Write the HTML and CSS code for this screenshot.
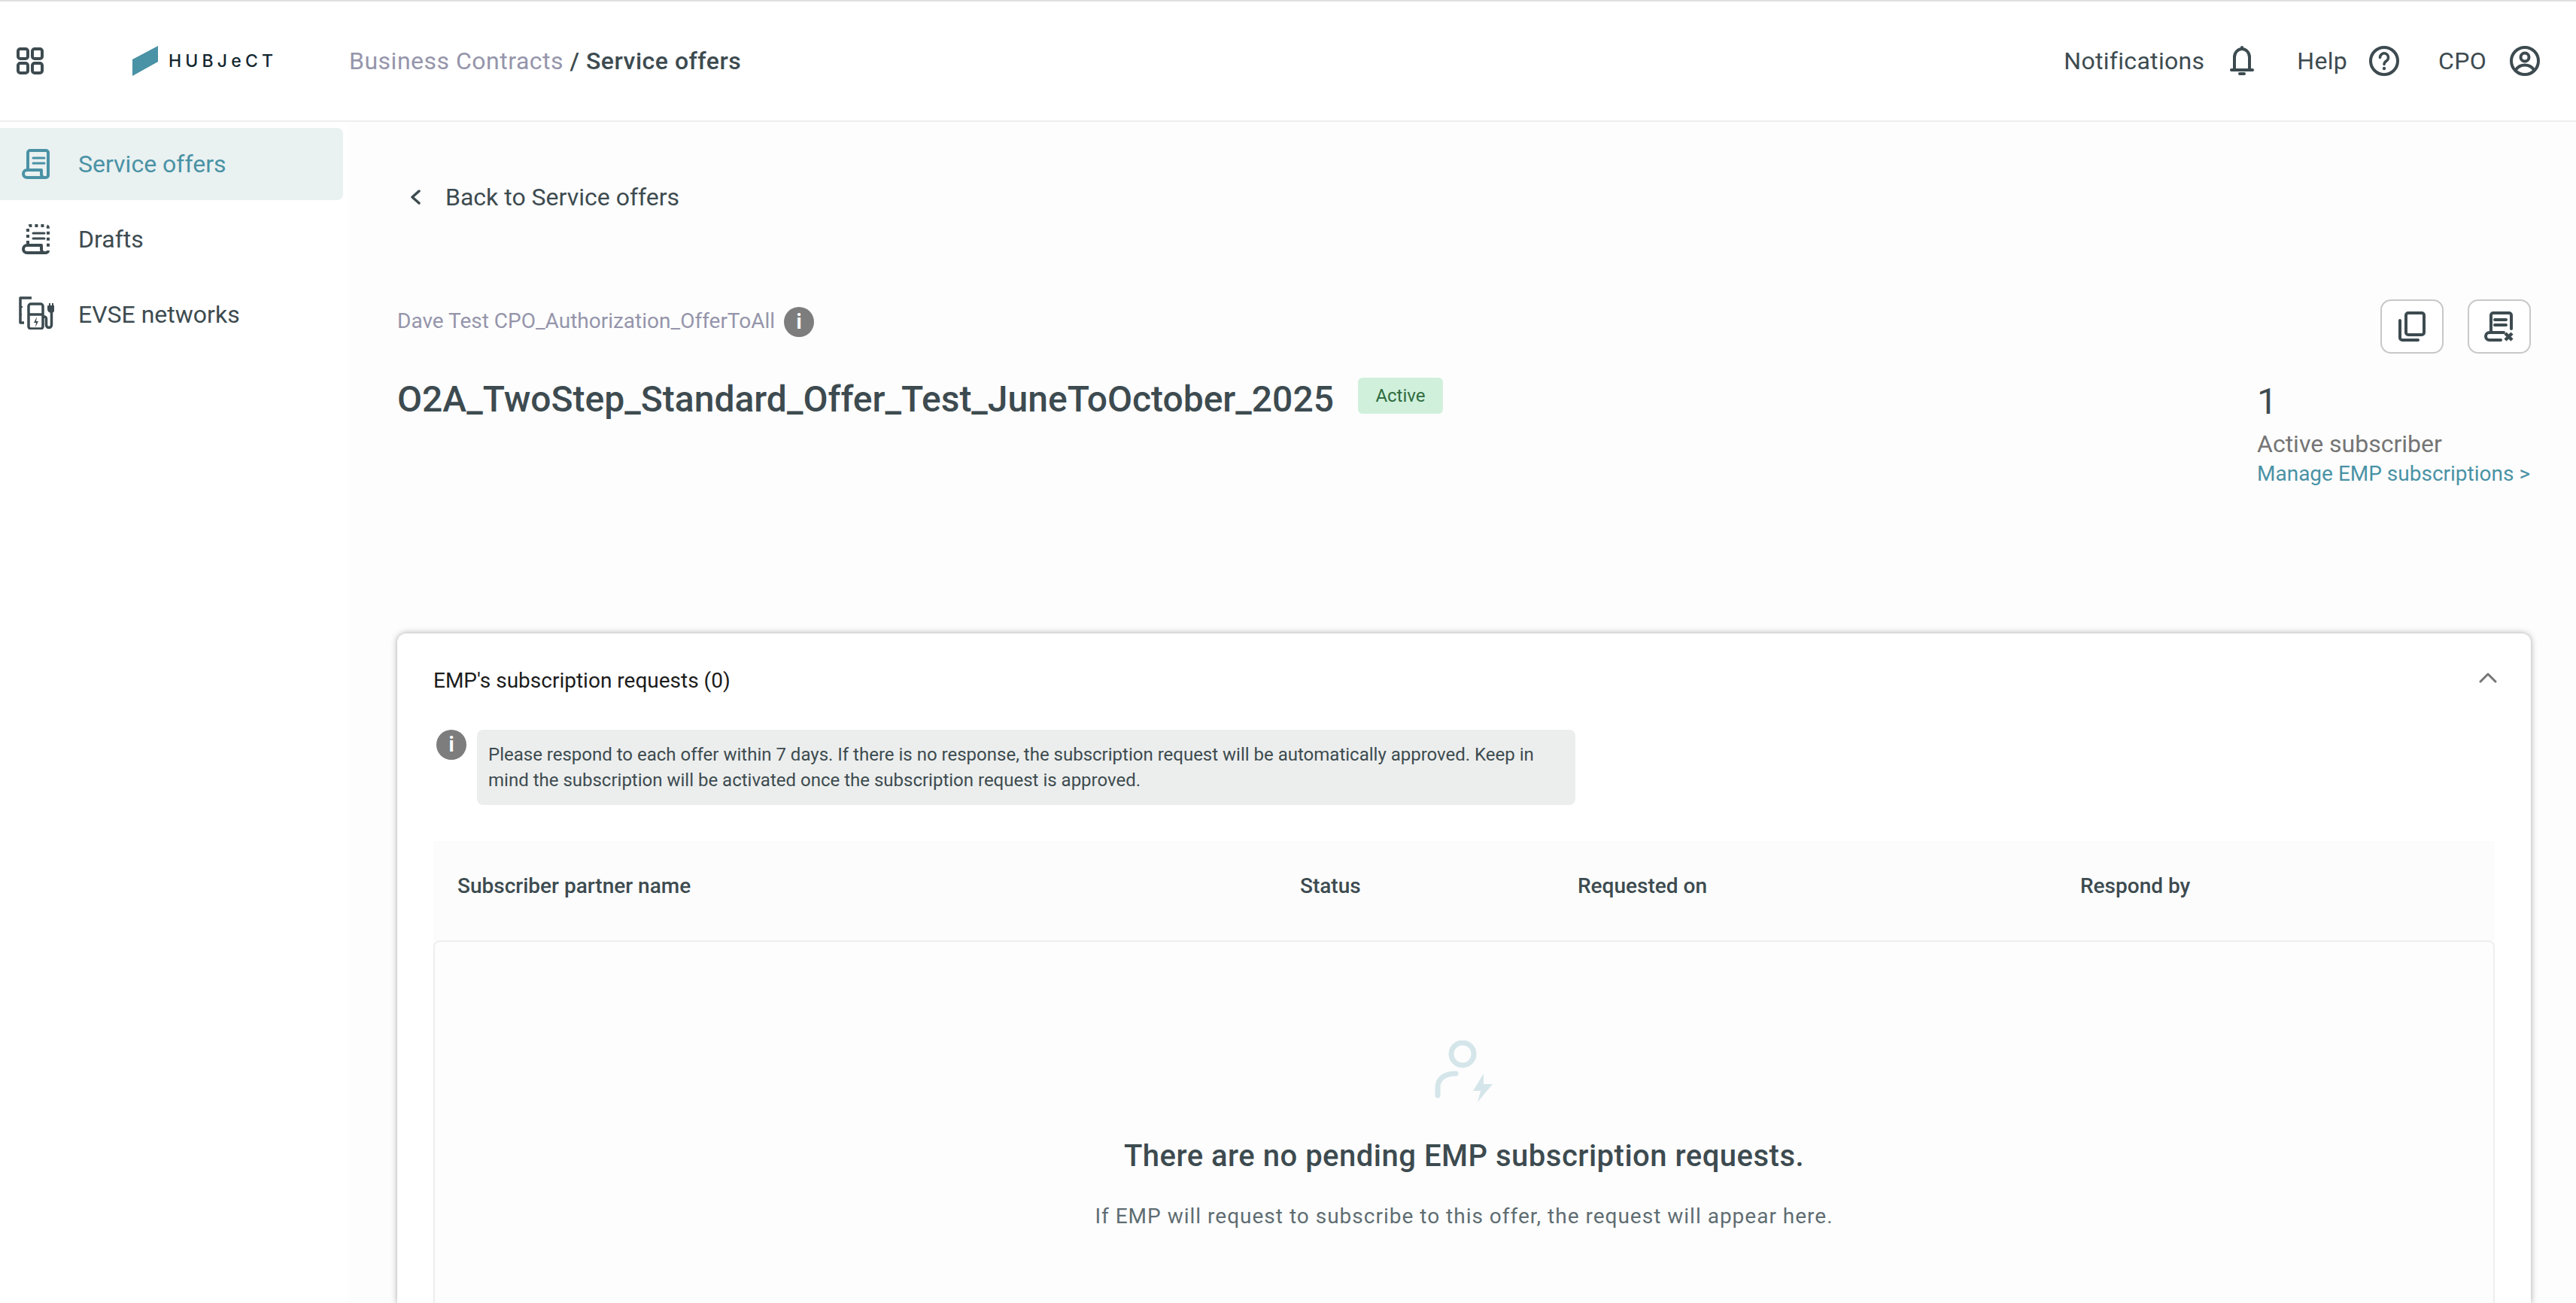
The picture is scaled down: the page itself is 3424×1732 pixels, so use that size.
FILE: index.html
```html
<!DOCTYPE html>
<html lang="en">
<head>
<meta charset="utf-8">
<title>Service offers</title>
<link rel="stylesheet" href="styles.css">
</head>
<body>
<header class="topbar">
  <div class="top-left">
    <svg class="apps-icon" viewBox="0 0 36 36" fill="none" stroke="#3d4b50" stroke-width="4">
      <rect x="2" y="2" width="13" height="13" rx="3"/><rect x="21" y="2" width="13" height="13" rx="3"/>
      <rect x="2" y="21" width="13" height="13" rx="3"/><rect x="21" y="21" width="13" height="13" rx="3"/>
    </svg>
    <div class="logo">
      <svg class="logo-mark" viewBox="0 0 34 40"><polygon points="0,18 34,0 34,21 0,40" fill="#4a92a5"/></svg>
      <span class="logo-text">HUBJeCT</span>
    </div>
    <nav class="crumbs"><span class="crumb-muted">Business Contracts</span> <span class="crumb-current">/ Service offers</span></nav>
  </div>
  <div class="top-right">
    <div class="top-item notif"><span>Notifications</span>
      <svg class="top-icon bell" viewBox="0 0 32 40" fill="none" stroke="#3d4b50" stroke-width="4" stroke-linecap="round"><path d="M6 32V15a10 11 0 0 1 20 0v17"/><path d="M2 32h28"/><path d="M16 2v2"/><path d="M13 37h6" stroke-width="4"/></svg>
    </div>
    <div class="top-item help"><span>Help</span>
      <svg class="top-icon" viewBox="0 0 40 40" fill="none" stroke="#3d4b50" stroke-width="4" stroke-linecap="round"><circle cx="20" cy="20" r="18"/><path d="M14.500 15.500a5.500 5.500 0 1 1 8.500 4.500c-2 1.400-3 2.500-3 4.500" stroke-width="3.500"/><circle cx="20" cy="30" r="1.200" stroke-width="2"/></svg>
    </div>
    <div class="top-item cpo"><span>CPO</span>
      <svg class="top-icon" viewBox="0 0 40 40" fill="none" stroke="#3d4b50" stroke-width="4" stroke-linecap="round"><circle cx="20" cy="20" r="18"/><circle cx="20" cy="15" r="5.500"/><path d="M8 32c3-5 7-6.500 12-6.500s9 1.500 12 6.500"/></svg>
    </div>
  </div>
</header>

<div class="shell">
  <aside class="sidebar">
    <a class="side-item active">
      <svg class="side-icon" viewBox="0 0 48 44" fill="none" stroke="#4a92a5" stroke-width="4" stroke-linecap="round" stroke-linejoin="round"><path d="M13 30V7a3 3 0 0 1 3-3h21a3 3 0 0 1 3 3v30a3 3 0 0 1-3 3H12a5 5 0 0 1 0-10h19v5a5 5 0 0 0 3 5"/><path d="M20 14h15M20 21h15" stroke-width="3"/></svg>
      <span>Service offers</span>
    </a>
    <a class="side-item">
      <svg class="side-icon" viewBox="0 0 48 44" fill="none" stroke="#3d4b50" stroke-width="4" stroke-linejoin="round"><path d="M13 28V7a3 3 0 0 1 3-3h21a3 3 0 0 1 3 3v28" stroke-dasharray="4 4"/><path d="M40 37a3 3 0 0 1-3 3H12a5 5 0 0 1 0-10h19v5a5 5 0 0 0 3 5"/><path d="M20 14h15M20 21h15" stroke-width="3" stroke-linecap="round"/></svg>
      <span>Drafts</span>
    </a>
    <a class="side-item">
      <svg class="side-icon evse" viewBox="0 0 48 44" fill="none" stroke="#3d4b50" stroke-width="3.500" stroke-linejoin="round"><path d="M18 2H3v33h5"/><path d="M3 14h3M3 24h2" stroke-width="2"/><rect x="14" y="10" width="19" height="33" rx="3"/><path d="M14 24h19"/><path d="M25 27l-4 8h3l-1 6 4-8h-3z" fill="#3d4b50" stroke="none"/><path d="M33 27h2a2.500 2.500 0 0 1 2.500 2.500V38a3.500 3.500 0 0 0 7 0V20"/><path d="M40 13h8v4a4 4 0 0 1-8 0zM42 9v4M46 9v4" fill="#3d4b50" stroke-width="2"/></svg>
      <span>EVSE networks</span>
    </a>
  </aside>

  <main class="main">
    <a class="back">
      <svg class="back-icon" viewBox="0 0 16 22" fill="none" stroke="#3d4b50" stroke-width="3.500" stroke-linecap="round" stroke-linejoin="round"><path d="M13 3l-9 8 9 8"/></svg>
      <span>Back to Service offers</span>
    </a>

    <section class="offer-head">
      <div class="offer-left">
        <div class="offer-owner"><span class="owner-name">Dave Test CPO_Authorization_OfferToAll</span>
          <span class="info-dot">i</span>
        </div>
        <div class="offer-title-row">
          <h1 class="offer-title">O2A_TwoStep_Standard_Offer_Test_JuneToOctober_2025</h1>
          <span class="badge">Active</span>
        </div>
      </div>
      <div class="offer-right">
        <div class="actions">
          <button class="icon-btn"><svg class="btn-icon" viewBox="0 0 36 40" fill="none" stroke="#3d4b50" stroke-width="4" stroke-linecap="round" stroke-linejoin="round"><rect x="10" y="2" width="24" height="29" rx="3"/><path d="M2 12v23a3 3 0 0 0 3 3h21"/></svg></button>
          <button class="icon-btn"><svg class="btn-icon btn-icon-wide" viewBox="0 0 40 40" fill="none" stroke="#3d4b50" stroke-width="4" stroke-linecap="round" stroke-linejoin="round"><path d="M9 28V5a3 3 0 0 1 3-3h21a3 3 0 0 1 3 3v18"/><path d="M14 11h15M14 18h15"/><path d="M22 38H7a5 5 0 0 1 0-10h19"/><path d="M28 29l9 9M37 29l-9 9" stroke-width="4.500" stroke-linecap="butt"/></svg></button>
        </div>
        <div class="stats">
          <div class="stat-num">1</div>
          <div class="stat-label">Active subscriber</div>
          <a class="stat-link">Manage EMP subscriptions &gt;</a>
        </div>
      </div>
    </section>

    <section class="card">
      <div class="card-head">
        <h2 class="card-title">EMP's subscription requests (0)</h2>
        <svg class="chev-up" viewBox="0 0 24 14" fill="none" stroke="#757575" stroke-width="3" stroke-linecap="round" stroke-linejoin="round"><path d="M2 12L12 2l10 10"/></svg>
      </div>
      <div class="notice-row">
        <span class="info-dot">i</span>
        <p class="notice">Please respond to each offer within 7 days. If there is no response, the subscription request will be automatically approved. Keep in mind the subscription will be activated once the subscription request is approved.</p>
      </div>
      <div class="table-head">
        <span class="col col-name">Subscriber partner name</span>
        <span class="col col-status">Status</span>
        <span class="col col-req">Requested on</span>
        <span class="col col-resp">Respond by</span>
      </div>
      <div class="empty">
        <svg class="empty-icon" viewBox="0 0 78 82" fill="none" stroke="#d5e6ea" stroke-width="7" stroke-linecap="round"><circle cx="37" cy="18" r="15"/><path d="M4 73V62c0-10 8-18 24-18"/><path d="M65 44l-14 23h10l-4 15 20-24H65z" fill="#d5e6ea" stroke="none"/></svg>
        <h3 class="empty-title">There are no pending EMP subscription requests.</h3>
        <p class="empty-sub">If EMP will request to subscribe to this offer, the request will appear here.</p>
      </div>
    </section>
  </main>
</div>
</body>
</html>
```
FILE: styles.css
```css
* { box-sizing: border-box; }
html, body { margin: 0; padding: 0; height: 1732px; overflow: hidden; }
body { font-family: Roboto, "Liberation Sans", sans-serif; color: #3d4b50; background: #fff; font-size: 32px; }

.topbar { height: 162px; border-top: 2px solid #e0e0e0; border-bottom: 2px solid #eeeeee; display: flex; align-items: center; justify-content: space-between; background: #fff; padding: 0 48px 0 22px; }
.top-left { display: flex; align-items: center; }
.apps-icon { width: 36px; height: 36px; display: block; }
.logo { width: 288px; margin-left: 118px; display: flex; align-items: center; }
.logo-mark { width: 34px; height: 40px; display: block; }
.logo-text { margin-left: 14px; font-family: Inter, sans-serif; font-size: 23px; font-weight: 500; letter-spacing: 5.200px; color: #12262e; line-height: 1; }
.crumbs { font-size: 32px; line-height: 40px; white-space: pre-wrap; letter-spacing: .5px; }
.crumb-muted { color: #9595ab; }
.crumb-current { font-weight: 500; color: #3d4b50; }

.top-right { display: flex; align-items: center; letter-spacing: .3px; }
.top-item { display: flex; align-items: center; line-height: 40px; }
.top-icon { width: 40px; height: 40px; display: block; }
.bell { width: 32px; }
.notif .top-icon { margin-left: 34px; }
.help { margin-left: 57px; }
.help .top-icon { margin-left: 29px; }
.cpo { margin-left: 52px; }
.cpo .top-icon { margin-left: 31px; }

.shell { display: flex; height: 1570px; overflow: hidden; }
.sidebar { width: 463px; flex: none; background: #fff; padding-top: 8px; display: flex; flex-direction: column; gap: 4px; }
.side-item { width: 456px; height: 96px; display: flex; align-items: center; padding-left: 24px; border-radius: 0 8px 8px 0; color: #3d4b50; }
.side-item.active { background: #e9f1f1; color: #4a92a5; }
.side-icon { width: 48px; height: 44px; display: block; flex: none; margin-right: 32px; }
.side-icon.evse { margin-top: -4px; }

.main { flex: 1; min-width: 0; height: 1570px; overflow: hidden; background: #fdfdfd; padding: 0 60px 4px 65px; }
.back { display: flex; align-items: center; height: 40px; margin-top: 80px; margin-left: 16px; }
.back-icon { width: 16px; height: 22px; display: block; margin-right: 32px; }

.offer-head { display: flex; justify-content: space-between; margin-top: 116px; height: 444px; }
.offer-owner { display: flex; align-items: center; font-size: 28px; color: #9595ab; height: 40px; margin-top: 10px; }
.owner-name { margin-bottom: 4px; }
.info-dot { width: 40px; height: 40px; border-radius: 50%; background: #7d7d7d; color: #fff; font-weight: 700; font-size: 27px; display: flex; align-items: center; justify-content: center; flex: none; }
.offer-owner .info-dot { margin-left: 12px; }
.offer-title-row { display: flex; align-items: flex-start; margin-top: 54px; }
.offer-title { margin: -3px 0 0; font-size: 48px; font-weight: 500; line-height: 64px; color: #3d4b50; }
.badge { margin-left: 32px; height: 48px; width: 113px; display: flex; align-items: center; justify-content: center; background: #d0f0dc; color: #2f6b3f; font-size: 24px; border-radius: 6px; }

.offer-right { display: flex; flex-direction: column; align-items: flex-end; }
.actions { display: flex; gap: 32px; }
.icon-btn { width: 84px; height: 72px; background: #fff; border: 2px solid #c8c8c8; border-radius: 14px; padding: 0; display: flex; align-items: center; justify-content: center; }
.btn-icon { width: 36px; height: 40px; display: block; }
.btn-icon-wide { width: 40px; }
.stats { width: 364px; margin-top: 36px; }
.stat-num { font-size: 48px; line-height: 56px; color: #3d4b50; }
.stat-label { font-size: 32px; line-height: 40px; color: #757575; margin-top: 8px; }
.stat-link { font-size: 28px; line-height: 38px; color: #4a92a5; display: block; white-space: nowrap; margin-top: 1px; }

.card { background: #fff; border-radius: 12px 12px 0 0; box-shadow: 0 0 9px rgba(0,0,0,.35); height: 890px; padding: 0 48px; }
.card-head { height: 128px; display: flex; align-items: center; justify-content: space-between; padding-bottom: 2px; }
.card-title { margin: 0; font-size: 28px; font-weight: 400; color: #1c1c1c; line-height: 40px; }
.chev-up { width: 24px; height: 14px; display: block; margin-top: -8px; margin-right: -3px; }
.notice-row { display: flex; align-items: flex-start; margin-left: 4px; }
.notice { margin: 0 0 0 14px; width: 1460px; height: 100px; background: #eceeed; border-radius: 8px; padding: 16px 15px 0; font-size: 24px; line-height: 34px; color: #3d4b50; }
.table-head { height: 132px; margin-top: 48px; background: #fcfcfc; display: grid; grid-template-columns: 1120px 369px 668px 1fr; align-items: center; padding: 0 0 14px 32px; font-size: 28px; font-weight: 500; color: #3d4b50; }
.empty { border: 2px solid #eeeeee; border-bottom: none; border-radius: 8px 8px 0 0; background: #fdfdfd; height: 482px; display: flex; flex-direction: column; align-items: center; padding-top: 131px; }
.empty-icon { width: 78px; height: 82px; display: block; }
.empty-title { margin: 44px 0 0; font-size: 40px; font-weight: 500; line-height: 56px; color: #3d4b50; letter-spacing: .5px; }
.empty-sub { margin: 32px 0 0; font-size: 28px; line-height: 40px; color: #5f6d72; letter-spacing: 1px; }
```
